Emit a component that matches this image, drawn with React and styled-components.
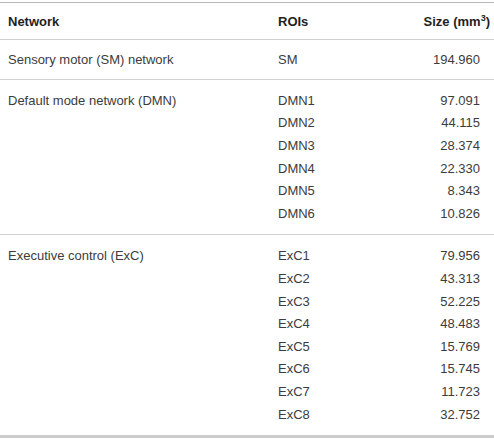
import React from 'react';
import styled, { createGlobalStyle } from 'styled-components';

const GlobalStyle = createGlobalStyle`
  html, body {
    margin: 0;
    padding: 0;
    background: #ffffff;
  }
  body {
    font-family: "Liberation Sans", Arial, sans-serif;
    -webkit-font-smoothing: antialiased;
  }
`;

const Table = styled.div`
  width: 494px;
  height: 440px;
  box-sizing: border-box;
  padding-top: 2px;
  display: flex;
  flex-direction: column;
`;

const Head = styled.div`
  display: grid;
  grid-template-columns: 270px 1fr auto;
  align-items: center;
  height: 36px;
  padding: 0 4px 0 8px;
  border-top: 1px solid #b8b8b8;
  border-bottom: 1px solid #cfcfcf;
  font-size: 13px;
  font-weight: 700;
  color: #1e1e1e;
`;

const Sup = styled.sup`
  font-size: 9px;
  vertical-align: 5px;
  line-height: 0;
`;

const Group = styled.div`
  padding: ${({ $pad }) => $pad}px 14px ${({ $pad }) => $pad}px 8px;
  border-bottom: ${({ $last }) => ($last ? '3px solid #cccccc' : '1px solid #d2d2d2')};
`;

const Row = styled.div`
  display: grid;
  grid-template-columns: 270px 1fr auto;
  align-items: center;
  height: 22.6px;
  font-size: 13px;
  color: #3c3c3c;
`;

const Num = styled.span`
  text-align: right;
`;

const groups = [
  { network: 'Sensory motor (SM) network', rows: [['SM', '194.960']] },
  {
    network: 'Default mode network (DMN)',
    rows: [
      ['DMN1', '97.091'],
      ['DMN2', '44.115'],
      ['DMN3', '28.374'],
      ['DMN4', '22.330'],
      ['DMN5', '8.343'],
      ['DMN6', '10.826'],
    ],
  },
  {
    network: 'Executive control (ExC)',
    rows: [
      ['ExC1', '79.956'],
      ['ExC2', '43.313'],
      ['ExC3', '52.225'],
      ['ExC4', '48.483'],
      ['ExC5', '15.769'],
      ['ExC6', '15.745'],
      ['ExC7', '11.723'],
      ['ExC8', '32.752'],
    ],
  },
];

const App = () => (
  <>
    <GlobalStyle />
    <Table>
      <Head>
        <span>Network</span>
        <span>ROIs</span>
        <Num>
          Size (mm<Sup>3</Sup>)
        </Num>
      </Head>
      {groups.map((g, gi) => (
        <Group key={g.network} $pad={gi === 0 ? 8 : 9.5} $last={gi === groups.length - 1}>
          {g.rows.map(([roi, size], i) => (
            <Row key={roi}>
              <span>{i === 0 ? g.network : ''}</span>
              <span>{roi}</span>
              <Num>{size}</Num>
            </Row>
          ))}
        </Group>
      ))}
    </Table>
  </>
);

export default App;
